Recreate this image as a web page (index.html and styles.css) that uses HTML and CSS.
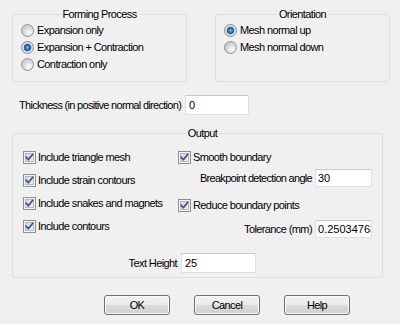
FILE: index.html
```html
<!DOCTYPE html>
<html>
<head>
<meta charset="utf-8">
<title>Options</title>
<link rel="stylesheet" href="styles.css">
</head>
<body>
<div class="dialog">
  <div class="top-row">
    <fieldset class="group">
      <legend align="center">Forming Process</legend>
      <div class="opt"><span class="radio"></span>Expansion only</div>
      <div class="opt"><span class="radio on"></span>Expansion + Contraction</div>
      <div class="opt"><span class="radio"></span>Contraction only</div>
    </fieldset>
    <fieldset class="group">
      <legend align="center">Orientation</legend>
      <div class="opt"><span class="radio on"></span>Mesh normal up</div>
      <div class="opt"><span class="radio"></span>Mesh normal down</div>
    </fieldset>
  </div>

  <div class="thick-row">
    <label class="tight">Thickness (in positive normal direction)</label>
    <input class="edit thick" value="0">
  </div>

  <fieldset class="group output">
    <legend align="center">Output</legend>
    <div class="out-cols">
      <div class="col-left">
        <div class="chk"><span class="cb"><svg width="11" height="11" viewBox="0 0 11 11"><path class="ck" d="M2.2 5.2 4.4 7.6 8.6 2.4"/></svg></span>Include triangle mesh</div>
        <div class="chk"><span class="cb"><svg width="11" height="11" viewBox="0 0 11 11"><path class="ck" d="M2.2 5.2 4.4 7.6 8.6 2.4"/></svg></span>Include strain contours</div>
        <div class="chk"><span class="cb"><svg width="11" height="11" viewBox="0 0 11 11"><path class="ck" d="M2.2 5.2 4.4 7.6 8.6 2.4"/></svg></span>Include snakes and magnets</div>
        <div class="chk"><span class="cb"><svg width="11" height="11" viewBox="0 0 11 11"><path class="ck" d="M2.2 5.2 4.4 7.6 8.6 2.4"/></svg></span>Include contours</div>
      </div>
      <div class="col-right">
        <div class="chk"><span class="cb"><svg width="11" height="11" viewBox="0 0 11 11"><path class="ck" d="M2.2 5.2 4.4 7.6 8.6 2.4"/></svg></span>Smooth boundary</div>
        <div class="field"><label class="narrow">Breakpoint detection angle</label><input class="edit small" value="30"></div>
        <div class="chk reduce"><span class="cb"><svg width="11" height="11" viewBox="0 0 11 11"><path class="ck" d="M2.2 5.2 4.4 7.6 8.6 2.4"/></svg></span>Reduce boundary points</div>
        <div class="field tol"><label>Tolerance (mm)</label><input class="edit small" value="0.25034763"></div>
      </div>
    </div>
    <div class="th-row"><label>Text Height</label><input class="edit theight" value="25"></div>
  </fieldset>

  <div class="buttons">
    <button class="btn">OK</button>
    <button class="btn">Cancel</button>
    <button class="btn">Help</button>
  </div>
</div>
</body>
</html>
```

FILE: styles.css
```css
* { box-sizing: border-box; }
html, body { margin: 0; background: #f0f0f0; }
body {
  width: 400px;
  height: 324px;
  overflow: hidden;
  font: 11px/13px "Liberation Sans", Arial, sans-serif;
  letter-spacing: -0.6px;
  color: #000;
}
label { white-space: nowrap; }
.dialog { padding: 8px 0 0 12px; }

.top-row { display: flex; gap: 28px; }
.group {
  margin: 0;
  padding: 1px 8px 8px;
  border: 1px solid #d5dfe5;
  border-radius: 3px;
  min-inline-size: 0;
}
.top-row .group { width: 175px; }
legend {
  padding: 0 2px;
  margin: 0 auto;
  line-height: 13px;
}

.opt { display: flex; align-items: center; height: 17px; white-space: nowrap; }
.radio {
  flex: none;
  width: 13px;
  height: 13px;
  margin-right: 3px;
  border-radius: 50%;
  border: 1px solid #8f9194;
  background: radial-gradient(circle at 65% 70%, #fbfbfb 0, #e9e9e9 3px, #d0d0d0 6px);
}
.radio.on {
  background: radial-gradient(circle at 50% 50%, #8fc4f0 0, #2f83d6 1.5px, #1d5ea8 3px, #4a7fb8 3.6px, #e6e6e6 4.2px, #d2d2d2 6px);
}

.thick-row {
  display: flex;
  justify-content: space-between;
  align-items: center;
  width: 237px;
  margin-top: 13px;
  padding-left: 7px;
}
.thick-row .tight { letter-spacing: -0.7px; }
.edit {
  height: 20px;
  margin: 0;
  padding: 0 0 0 3px;
  border: 1px solid #dde0e5;
  border-top-color: #c6cace;
  background: #fff;
  font: inherit;
  letter-spacing: 0;
  color: #000;
  outline: none;
}
.thick { width: 64px; }

.output {
  width: 371px;
  margin-top: 12px;
  padding: 6px 0 4px 10px;
}
.out-cols { display: flex; }
.col-left { width: 155px; }
.col-right { width: 194px; }
.chk { display: flex; align-items: center; height: 23px; white-space: nowrap; }
.chk.reduce { margin-top: 7px; }
.cb {
  flex: none;
  display: flex;
  width: 13px;
  height: 13px;
  margin-right: 2px;
  border: 1px solid #8e8f8f;
  background: linear-gradient(135deg, #cdd0d5, #f7f7f7);
  box-shadow: inset 0 0 0 1px #f4f4f4, inset 0 0 0 2px #b5b9be;
}
.ck { fill: none; stroke: #3a5695; stroke-width: 1.7; stroke-linecap: square; }

.field {
  display: flex;
  justify-content: flex-end;
  align-items: center;
  gap: 3px;
  height: 18px;
  white-space: nowrap;
}
.field .narrow { letter-spacing: -0.7px; }
.field.tol { margin-top: 3px; }
.edit.small { width: 57px; height: 18px; padding-left: 2px; }

.th-row { display: flex; align-items: center; gap: 4px; margin-top: 15px; }
.th-row label { width: 154px; text-align: right; }
.theight { width: 75px; }

.buttons { display: flex; gap: 24px; margin-top: 17px; padding-left: 92px; }
.btn {
  width: 66px;
  height: 20px;
  padding: 0;
  border: 1px solid #707070;
  border-radius: 3px;
  background: linear-gradient(#f2f2f2 0, #ebebeb 50%, #dddddd 50%, #cfcfcf 100%);
  box-shadow: inset 0 0 0 1px #fbfbfb;
  font: inherit;
  letter-spacing: inherit;
  color: #000;
}
```
